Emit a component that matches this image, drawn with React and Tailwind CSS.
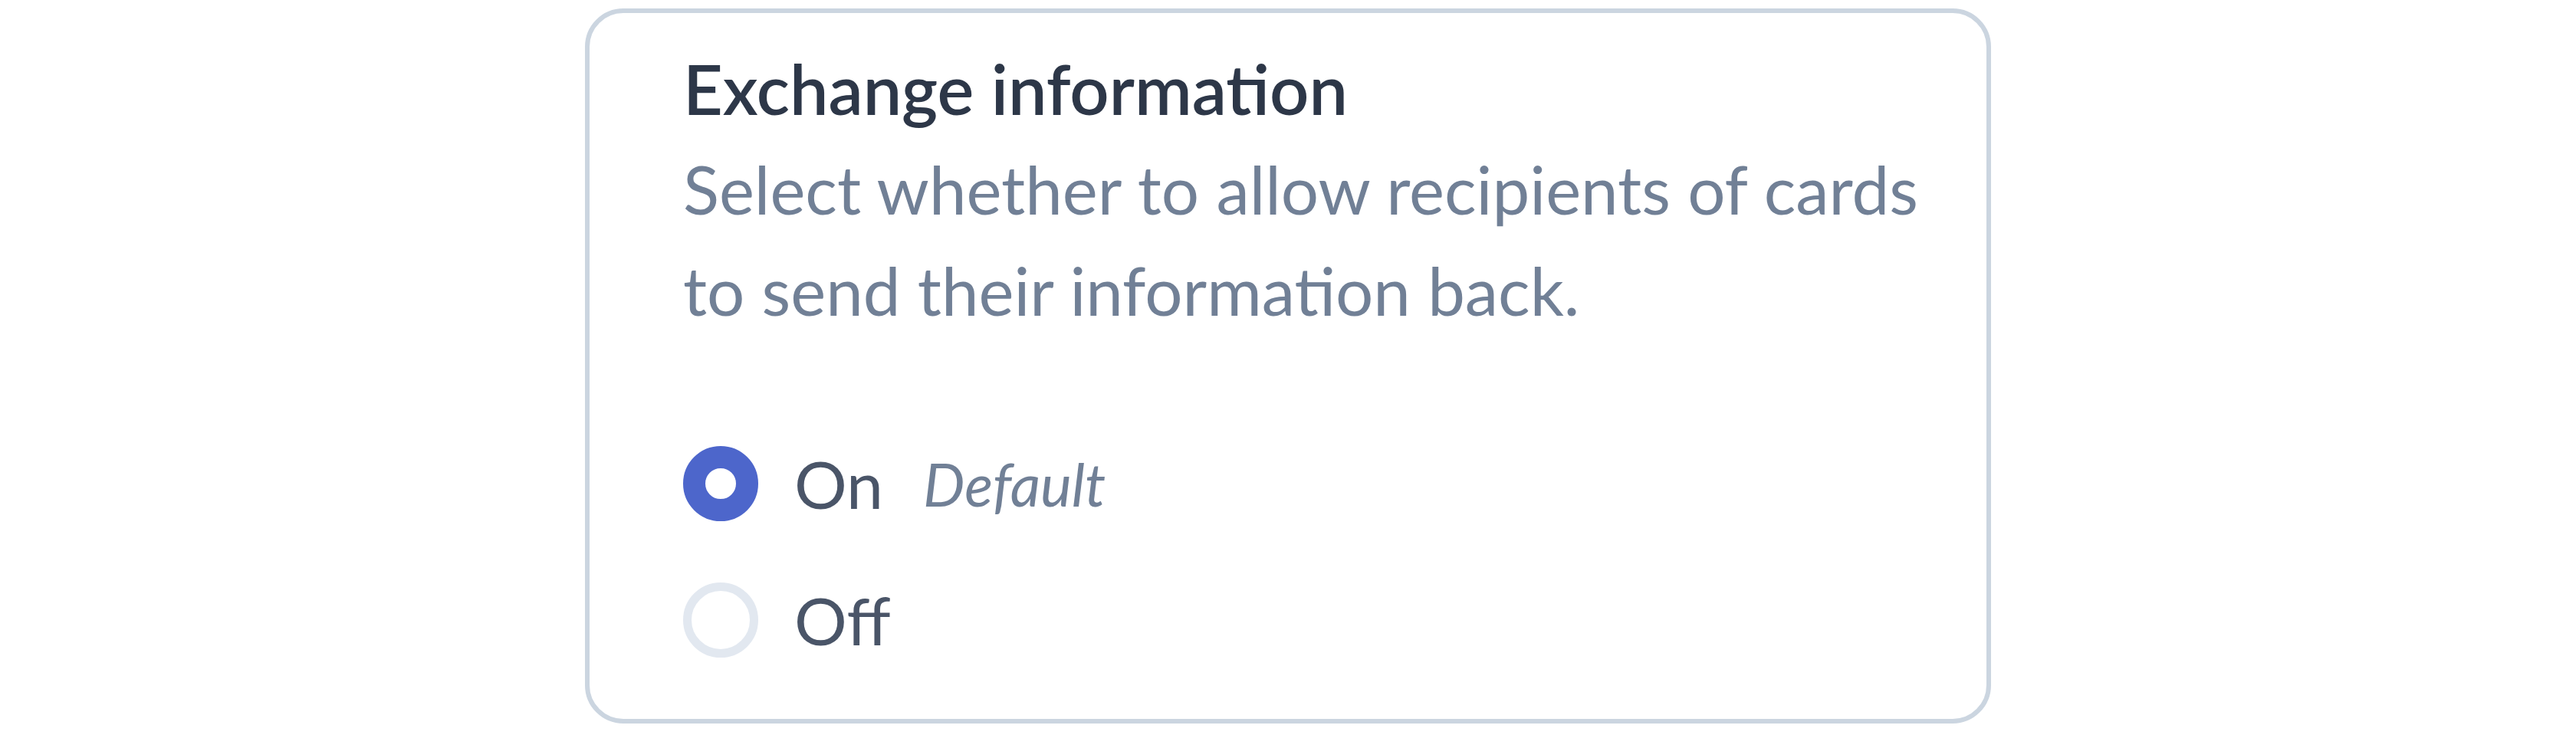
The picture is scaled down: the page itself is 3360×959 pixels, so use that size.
export default function App() {
  return (
    <div className="min-h-screen bg-white pt-[11px] pl-[763px]" style={{ fontFamily: 'Lato, "Noto Sans", sans-serif' }}>
      <div className="box-border w-[1834px] h-[933px] rounded-[50px] border-[6px] border-[#cbd5e0] bg-white pl-[122px] pt-[32px]">
        <div className="text-[90px] leading-[132px] font-semibold text-[#2d3748]">Exchange information</div>
        <div className="w-[1660px] text-[87px] leading-[132px] text-[#718096]">
          Select whether to allow recipients of cards to send their information back.
        </div>
        <div className="mt-[120px] flex flex-col gap-[46px]">
          <div className="flex h-[132px] items-center">
            <span className="box-border size-[98px] shrink-0 rounded-full border-[29px] border-[#4d66cb] bg-white" />
            <span className="ml-[47px] text-[86px] leading-[132px] text-[#4a5568]">On</span>
            <span className="ml-[52px] text-[77px] leading-[132px] italic text-[#718096]">Default</span>
          </div>
          <div className="flex h-[132px] items-center">
            <span className="box-border size-[98px] shrink-0 rounded-full border-[11px] border-[#e2e8f0] bg-white" />
            <span className="ml-[47px] text-[86px] leading-[132px] text-[#4a5568]">Off</span>
          </div>
        </div>
      </div>
    </div>
  );
}
